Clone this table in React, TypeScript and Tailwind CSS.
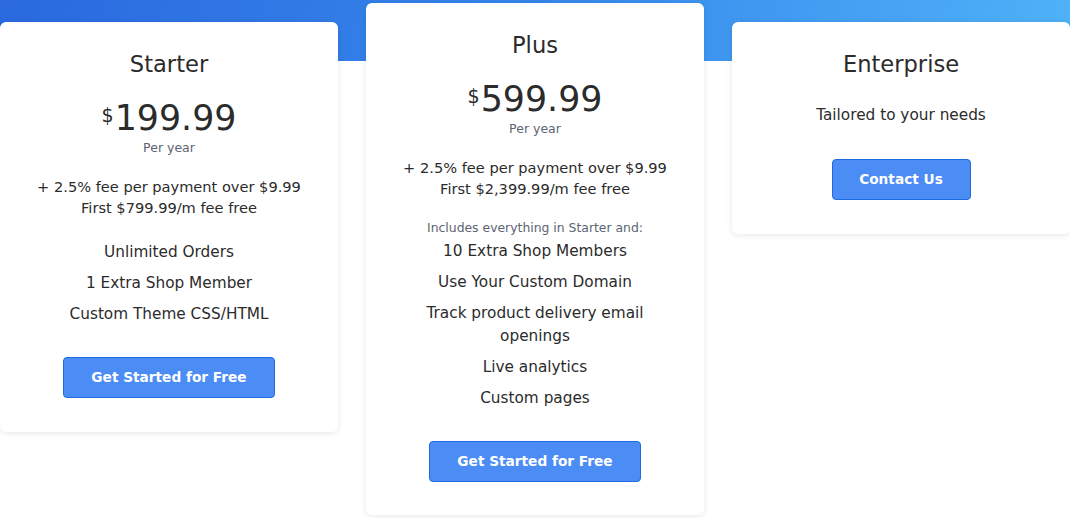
const plans = [
  {
    name: "Starter",
    price: "199.99",
    fee: ["+ 2.5% fee per payment over $9.99", "First $799.99/m fee free"],
    features: ["Unlimited Orders", "1 Extra Shop Member", "Custom Theme CSS/HTML"],
    raised: false,
  },
  {
    name: "Plus",
    price: "599.99",
    fee: ["+ 2.5% fee per payment over $9.99", "First $2,399.99/m fee free"],
    includes: "Includes everything in Starter and:",
    features: [
      "10 Extra Shop Members",
      "Use Your Custom Domain",
      "Track product delivery email openings",
      "Live analytics",
      "Custom pages",
    ],
    raised: true,
  },
];

const Button = ({ children, wide }: { children: React.ReactNode; wide?: boolean }) => (
  <button
    className={`${wide ? "w-[212px]" : "w-[139px]"} h-[41px] rounded-[4px] border border-[#1d6ae3] bg-[#4c8cf5] text-[13.7px] font-bold text-white`}
  >
    {children}
  </button>
);

type Plan = (typeof plans)[number] & { includes?: string };

const PlanCard = ({ plan }: { plan: Plan }) => (
  <div
    className={`${plan.raised ? "mt-[3px] pb-[33px]" : "mt-[22px] pb-[34px]"} flex flex-col items-center rounded-[6px] bg-white px-5 pt-[27px] text-center text-[#2b2b2b] shadow-[0_1px_6px_rgba(0,0,0,0.1)]`}
  >
    <h2 className="text-[22.6px] leading-[30px]">{plan.name}</h2>
    <div className="mt-[19px] flex items-start leading-[40px]">
      <span className="mt-[-3px] mr-px text-[19px]">$</span>
      <span className="text-[34.8px]">{plan.price}</span>
    </div>
    <p className="mt-[2px] text-[12.5px] leading-[16px] text-[#5b6573]">Per year</p>
    <div className="mt-[20px] text-[14.6px] leading-[21px]">
      {plan.fee.map((f) => (
        <p key={f}>{f}</p>
      ))}
    </div>
    {plan.includes && (
      <p className="mt-[21px] text-[12.4px] leading-[16px] text-[#5b6573]">{plan.includes}</p>
    )}
    <ul
      className={`${plan.includes ? "mt-[4px]" : "mt-[23px]"} flex w-[240px] flex-col gap-[8px] text-[15.3px] leading-[23px]`}
    >
      {plan.features.map((f) => (
        <li key={f}>{f}</li>
      ))}
    </ul>
    <div className="mt-[31px]">
      <Button wide>Get Started for Free</Button>
    </div>
  </div>
);

export default function App() {
  return (
    <div
      className="min-h-[518px] bg-white bg-[linear-gradient(100deg,#2a69df_0%,#3687eb_50%,#4fb2f8_100%)] bg-[length:100%_61px] bg-no-repeat"
      style={{ fontFamily: '"DejaVu Sans", sans-serif' }}
    >
      <div className="grid grid-cols-3 items-start gap-[28px]">
        {plans.map((p) => (
          <PlanCard key={p.name} plan={p} />
        ))}
        <div className="mt-[22px] flex flex-col items-center rounded-[6px] bg-white pt-[27px] pb-[34px] text-center text-[#2b2b2b] shadow-[0_1px_6px_rgba(0,0,0,0.1)]">
          <h2 className="text-[22.6px] leading-[30px]">Enterprise</h2>
          <p className="mt-[25px] text-[15.3px] leading-[23px]">Tailored to your needs</p>
          <div className="mt-[32px]">
            <Button>Contact Us</Button>
          </div>
        </div>
      </div>
    </div>
  );
}
